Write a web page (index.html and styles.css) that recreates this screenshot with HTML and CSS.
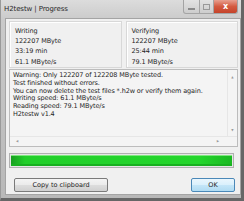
FILE: index.html
```html
<!DOCTYPE html>
<html>
<head>
<meta charset="utf-8">
<link rel="stylesheet" href="styles.css">
</head>
<body>
<div class="window">
  <div class="titlebar">
    <span class="title">H2testw | Progress</span>
    <div class="controls">
      <span class="btn min"><i></i></span>
      <span class="btn max"><i></i></span>
      <span class="btn close">x</span>
    </div>
  </div>
  <div class="client">
    <div class="groups">
      <div class="group">
        <div>Writing</div>
        <div>122207 MByte</div>
        <div>33:19 min</div>
        <div>61.1 MByte/s</div>
      </div>
      <div class="group">
        <div>Verifying</div>
        <div>122207 MByte</div>
        <div>25:44 min</div>
        <div>79.1 MByte/s</div>
      </div>
    </div>
    <div class="memo">
      <div class="memo-main">
        <div class="memo-text">
          <div>Warning: Only 122207 of 122208 MByte tested.</div>
          <div>Test finished without errors.</div>
          <div>You can now delete the test files *.h2w or verify them again.</div>
          <div>Writing speed: 61.1 MByte/s</div>
          <div>Reading speed: 79.1 MByte/s</div>
          <div>H2testw v1.4</div>
        </div>
        <div class="vscroll"><span class="arr">&#9650;</span><span class="arr">&#9660;</span></div>
      </div>
      <div class="hscroll"><span class="arr">&#9664;</span><span class="arr">&#9654;</span></div>
    </div>
    <div class="progress"><div class="fill"></div></div>
    <div class="buttons">
      <button class="button copy">Copy to clipboard</button>
      <button class="button ok">OK</button>
    </div>
  </div>
</div>
</body>
</html>
```
FILE: styles.css
```css
html, body {
  margin: 0;
  padding: 0;
  width: 244px;
  height: 201px;
  overflow: hidden;
  background: #8e8e8e;
}
.window {
  width: 244px;
  height: 201px;
  box-sizing: border-box;
  background: linear-gradient(#dcdcdc, #cacaca 20px, #b8b8b8);
  border-left: 1px solid #9a9a9a;
  border-right: 3px solid #666;
  border-bottom: 3px solid #666;
  display: flex;
  flex-direction: column;
  font-family: "DejaVu Sans", sans-serif;
}
.titlebar {
  height: 18px;
  display: flex;
  align-items: flex-start;
  justify-content: space-between;
}
.title {
  font-family: "DejaVu Sans", sans-serif;
  font-size: 7px;
  letter-spacing: -0.1px;
  color: #2a2a2a;
  margin: 5px 0 0 3px;
}
.controls {
  display: flex;
  margin-right: 3px;
}
.controls .btn {
  height: 14px;
  box-sizing: border-box;
  border: 1px solid #a4a4a4;
  border-top: none;
  background: linear-gradient(#e2e2e2, #cdcdcd);
  display: flex;
  align-items: center;
  justify-content: center;
}
.btn.min { width: 17px; border-radius: 0 0 0 3px; }
.btn.max { width: 14px; border-left: none; }
.btn.min i { width: 7px; height: 2px; background: #8a8a8a; margin-top: 4px; }
.btn.max i { width: 5px; height: 4px; border: 1px solid #999; }
.btn.close {
  width: 24px;
  border-left: none;
  border-radius: 0 0 3px 0;
  background: linear-gradient(#e8a090, #d45a40 50%, #c4432a);
  color: #fff;
  font-family: "DejaVu Sans", sans-serif;
  font-weight: bold;
  font-size: 8px;
  line-height: 1;
}
.client {
  flex: 1;
  margin: 0 0 3px 4px;
  background: #f0f0f0;
  border: 1px solid #a4a4a4;
  display: flex;
  flex-direction: column;
  padding: 2px 2px 0 3px;
  font-size: 6.5px;
  color: #262626;
}
.groups {
  display: flex;
  gap: 4px;
  height: 47px;
}
.group {
  flex: 1;
  border: 1px solid #d8d8d8;
  box-shadow: inset 1px 1px 0 #fff;
  padding: 4px 0 0 5px;
  line-height: 10.2px;
  letter-spacing: -0.1px;
}
.memo {
  margin-top: 1px;
  height: 76px;
  border: 1px solid #bcbcbc;
  background: #f4f4f4;
  display: flex;
  flex-direction: column;
}
.memo-main {
  flex: 1;
  display: flex;
}
.memo-text {
  flex: 1;
  padding: 2px 0 0 3px;
  line-height: 7.8px;
  letter-spacing: -0.12px;
  white-space: nowrap;
  overflow: hidden;
}
.vscroll {
  width: 9px;
  display: flex;
  flex-direction: column;
  justify-content: space-between;
  align-items: center;
  border-left: 1px solid #e6e6e6;
  padding: 6px 0 4px;
}
.hscroll {
  height: 9px;
  display: flex;
  justify-content: space-between;
  align-items: center;
  border-top: 1px solid #e6e6e6;
  padding: 0 18px 0 6px;
}
.arr {
  font-size: 3px;
  color: #999;
  line-height: 1;
}
.progress {
  margin-top: 6px;
  height: 15px;
  width: 225px;
  box-sizing: border-box;
  border: 1px solid #b0b0b0;
  background: #e6e6e6;
  padding: 1px;
}
.fill {
  height: 100%;
  background: linear-gradient(90deg, #189e20, #22cf2a 14px, #24d62c 85%, #1ab822);
  box-shadow: inset 0 1px 0 #7ee87e, inset 0 -2px 0 #18b020;
}
.buttons {
  margin-top: 10px;
  display: flex;
  justify-content: space-between;
  padding: 0 3px 0 5px;
}
.button {
  height: 14px;
  box-sizing: border-box;
  font-family: "DejaVu Sans", sans-serif;
  font-size: 6.5px;
  color: #262626;
  background: linear-gradient(#f4f4f4, #ebebeb 50%, #dddddd 51%, #d0d0d0);
  border: 1px solid #7a7a7a;
  border-radius: 2px;
  padding: 0;
}
.button.copy { width: 94px; }
.button.ok {
  width: 44px;
  border-color: #4a88b8;
  background: linear-gradient(#eaf6fd, #d9f0fc 50%, #c4e6f8 51%, #b0dbf2);
}
```
